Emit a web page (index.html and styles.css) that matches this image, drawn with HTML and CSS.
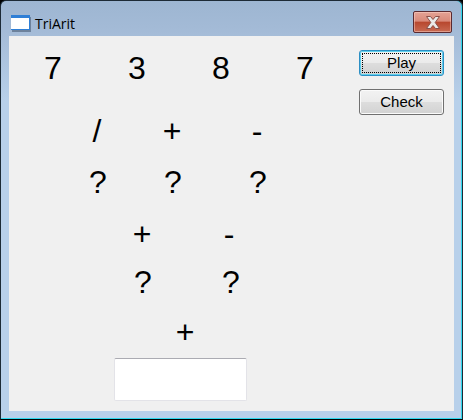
FILE: index.html
```html
<!DOCTYPE html>
<html lang="en">

<head>
    <meta charset="UTF-8">
    <title>TriArit</title>
    <link rel="stylesheet" href="styles.css">
</head>

<body>
    <div class="window">
        <div class="titlebar">
            <svg class="app-icon" width="21" height="18" viewBox="0 0 21 18">
                <rect x="2" y="3" width="19" height="15" fill="#6d829c"/>
                <rect x="1" y="1" width="19" height="15" fill="#2f7fd6"/>
                <rect x="1" y="4" width="18" height="11" fill="#ffffff"/>
            </svg>
            <span class="title">TriArit</span>
            <div class="close-button">
                <svg width="22" height="15" viewBox="0 0 22 15">
                    <path d="M4.5 1.5 L8.5 1.5 L11 4.5 L13.5 1.5 L17.5 1.5 L13.2 7.5 L17.5 13.5 L13.5 13.5 L11 10.5 L8.5 13.5 L4.5 13.5 L8.8 7.5 Z" fill="#ebe9e8" stroke="#8a4f48" stroke-width="1" stroke-linejoin="round"/>
                </svg>
            </div>
        </div>
        <div class="client">
            <div class="board">
                <div class="row row-numbers">
                    <span class="cell">7</span>
                    <span class="cell">3</span>
                    <span class="cell">8</span>
                    <span class="cell">7</span>
                </div>
                <div class="row row-ops-1">
                    <span class="cell">/</span>
                    <span class="cell">+</span>
                    <span class="cell">-</span>
                </div>
                <div class="row row-ask-1">
                    <span class="cell">?</span>
                    <span class="cell">?</span>
                    <span class="cell">?</span>
                </div>
                <div class="row row-ops-2">
                    <span class="cell">+</span>
                    <span class="cell">-</span>
                </div>
                <div class="row row-ask-2">
                    <span class="cell">?</span>
                    <span class="cell">?</span>
                </div>
                <div class="row row-ops-3">
                    <span class="cell">+</span>
                </div>
                <div class="result"></div>
            </div>
            <div class="side">
                <button class="btn btn-default"><span class="btn-focus">Play</span></button>
                <button class="btn">Check</button>
            </div>
        </div>
    </div>
</body>

</html>
```

FILE: styles.css
```css
html, body {
    margin: 0;
    padding: 0;
}

body {
    width: 463px;
    height: 420px;
    overflow: hidden;
    font-family: "Liberation Sans", Arial, sans-serif;
    background: #000;
}

.window {
    width: 463px;
    height: 420px;
    box-sizing: border-box;
    background: linear-gradient(#9db6d2 0, #a3bad6 26px, #b8d0ea 100px, #b8d0ea 100%);
    border: 1px solid #1c2a36;
    border-bottom-color: #000;
    border-radius: 6px 6px 0 0;
    box-shadow: inset 0 -1px 0 #2fd8ee, inset -1px 0 0 #2fd8ee;
    display: flex;
    flex-direction: column;
}

.titlebar {
    height: 35px;
    box-sizing: border-box;
    display: flex;
    align-items: center;
    padding: 9px 10px 0 9px;
    flex-shrink: 0;
}

.app-icon {
    margin-right: 4px;
}

.title {
    font-family: "Open Sans", "Liberation Sans", sans-serif;
    font-size: 14px;
    color: #000;
}

.close-button {
    margin-left: auto;
    align-self: flex-start;
    margin-top: 1px;
    width: 39px;
    height: 22px;
    box-sizing: border-box;
    border: 1px solid #5a2a30;
    border-radius: 2px;
    background: linear-gradient(#e4a295 0, #d98a7a 45%, #b8482f 52%, #c86a52 100%);
    box-shadow: inset 0 0 0 1px rgba(255, 220, 210, 0.45);
    display: flex;
    align-items: center;
    justify-content: center;
}

.client {
    width: 445px;
    height: 375px;
    margin-left: 8px;
    background: #f0f0f0;
    display: flex;
}

.board {
    width: 350px;
    flex-shrink: 0;
    font-size: 32px;
    color: #000;
}

.row {
    display: flex;
    height: 40px;
    line-height: 40px;
}

.cell {
    width: 40px;
    flex-shrink: 0;
    text-align: center;
}

.row-numbers {
    margin-top: 12px;
    padding-left: 24px;
    gap: 44px;
}

.row-ops-1 {
    margin-top: 23px;
    padding-left: 68px;
    gap: 35px;
}

.row-ops-1 .cell:last-child {
    margin-left: 10px;
}

.row-ask-1 {
    margin-top: 11px;
    padding-left: 69px;
    gap: 35px;
}

.row-ask-1 .cell:last-child {
    margin-left: 10px;
}

.row-ops-2 {
    margin-top: 12px;
    padding-left: 113px;
    gap: 47px;
}

.row-ask-2 {
    margin-top: 8px;
    padding-left: 114px;
    gap: 48px;
}

.row-ops-3 {
    margin-top: 10px;
    padding-left: 156px;
}

.result {
    width: 133px;
    height: 43px;
    box-sizing: border-box;
    margin: 6px 0 0 105px;
    background: #fff;
    border: 1px solid #e3e3e8;
    border-top-color: #ababb2;
    border-radius: 2px;
}

.side {
    display: flex;
    flex-direction: column;
    gap: 13px;
    padding-top: 14px;
}

.btn {
    width: 85px;
    height: 26px;
    box-sizing: border-box;
    padding: 0 0 2px;
    font-family: "Liberation Sans", Arial, sans-serif;
    font-size: 15px;
    color: #000;
    border: 1px solid #707070;
    border-radius: 3px;
    background: linear-gradient(#f2f2f2 0, #ebebeb 48%, #dddddd 52%, #d2d2d2 100%);
    box-shadow: inset 0 0 0 1px #fbfbfb;
}

.btn-default {
    border-color: #2c8fc4;
    box-shadow: inset 0 0 0 1px #5fd0ee;
    padding: 2px;
}

.btn-focus {
    display: block;
    height: 100%;
    box-sizing: border-box;
    border: 1px dotted #000;
    line-height: 17px;
}
```
